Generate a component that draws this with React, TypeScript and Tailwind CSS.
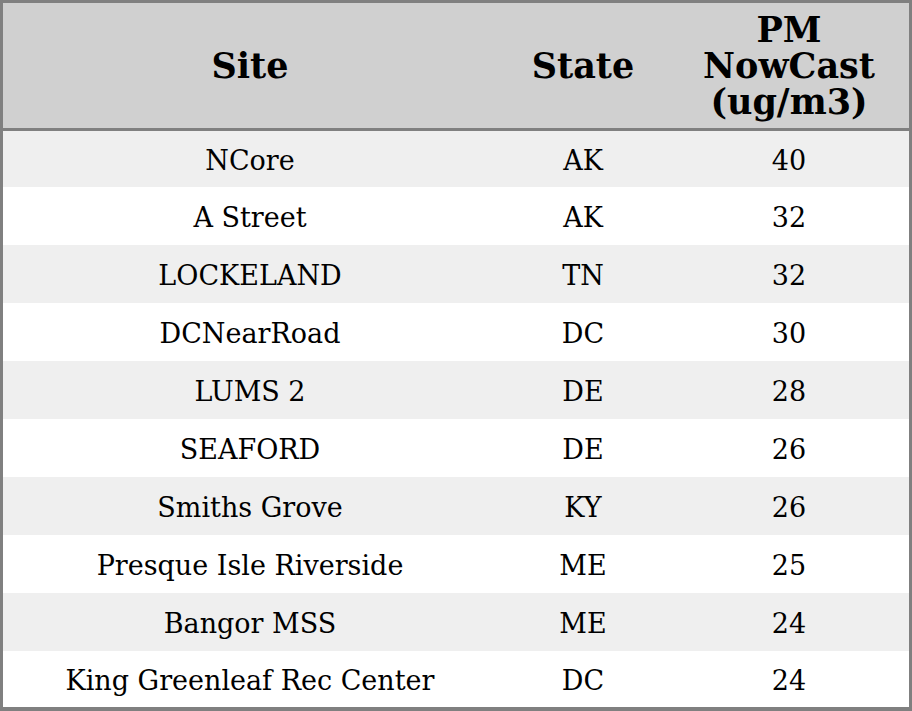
const rows = [
  { site: "NCore", state: "AK", pm: 40 },
  { site: "A Street", state: "AK", pm: 32 },
  { site: "LOCKELAND", state: "TN", pm: 32 },
  { site: "DCNearRoad", state: "DC", pm: 30 },
  { site: "LUMS 2", state: "DE", pm: 28 },
  { site: "SEAFORD", state: "DE", pm: 26 },
  { site: "Smiths Grove", state: "KY", pm: 26 },
  { site: "Presque Isle Riverside", state: "ME", pm: 25 },
  { site: "Bangor MSS", state: "ME", pm: 24 },
  { site: "King Greenleaf Rec Center", state: "DC", pm: 24 },
];

export default function App() {
  return (
    <div className="w-[912px] h-[711px] overflow-hidden bg-white font-['DejaVu_Serif',serif] text-black">
      <div className="border-[3px] border-b-[4px] border-[#808080] flex flex-col">
        <div className="flex h-[128px] bg-[#d0d0d0] border-b-[3px] border-[#808080] font-bold text-[35px] leading-[36px]">
          <div className="w-[494px] flex items-center justify-center">Site</div>
          <div className="w-[172px] flex items-center justify-center">State</div>
          <div className="flex-1 flex items-center justify-center text-center">
            PM
            <br />
            NowCast
            <br />
            (ug/m3)
          </div>
        </div>
        {rows.map((r, i) => (
          <div
            key={i}
            className={`flex items-center pt-1 text-[27px] ${i % 2 === 0 ? "bg-[#efefef]" : "bg-white"} ${i === 0 || i === rows.length - 1 ? "h-[56px]" : "h-[58px]"}`}
          >
            <div className="w-[494px] text-center">{r.site}</div>
            <div className="w-[172px] text-center">{r.state}</div>
            <div className="flex-1 text-center">{r.pm}</div>
          </div>
        ))}
      </div>
    </div>
  );
}
